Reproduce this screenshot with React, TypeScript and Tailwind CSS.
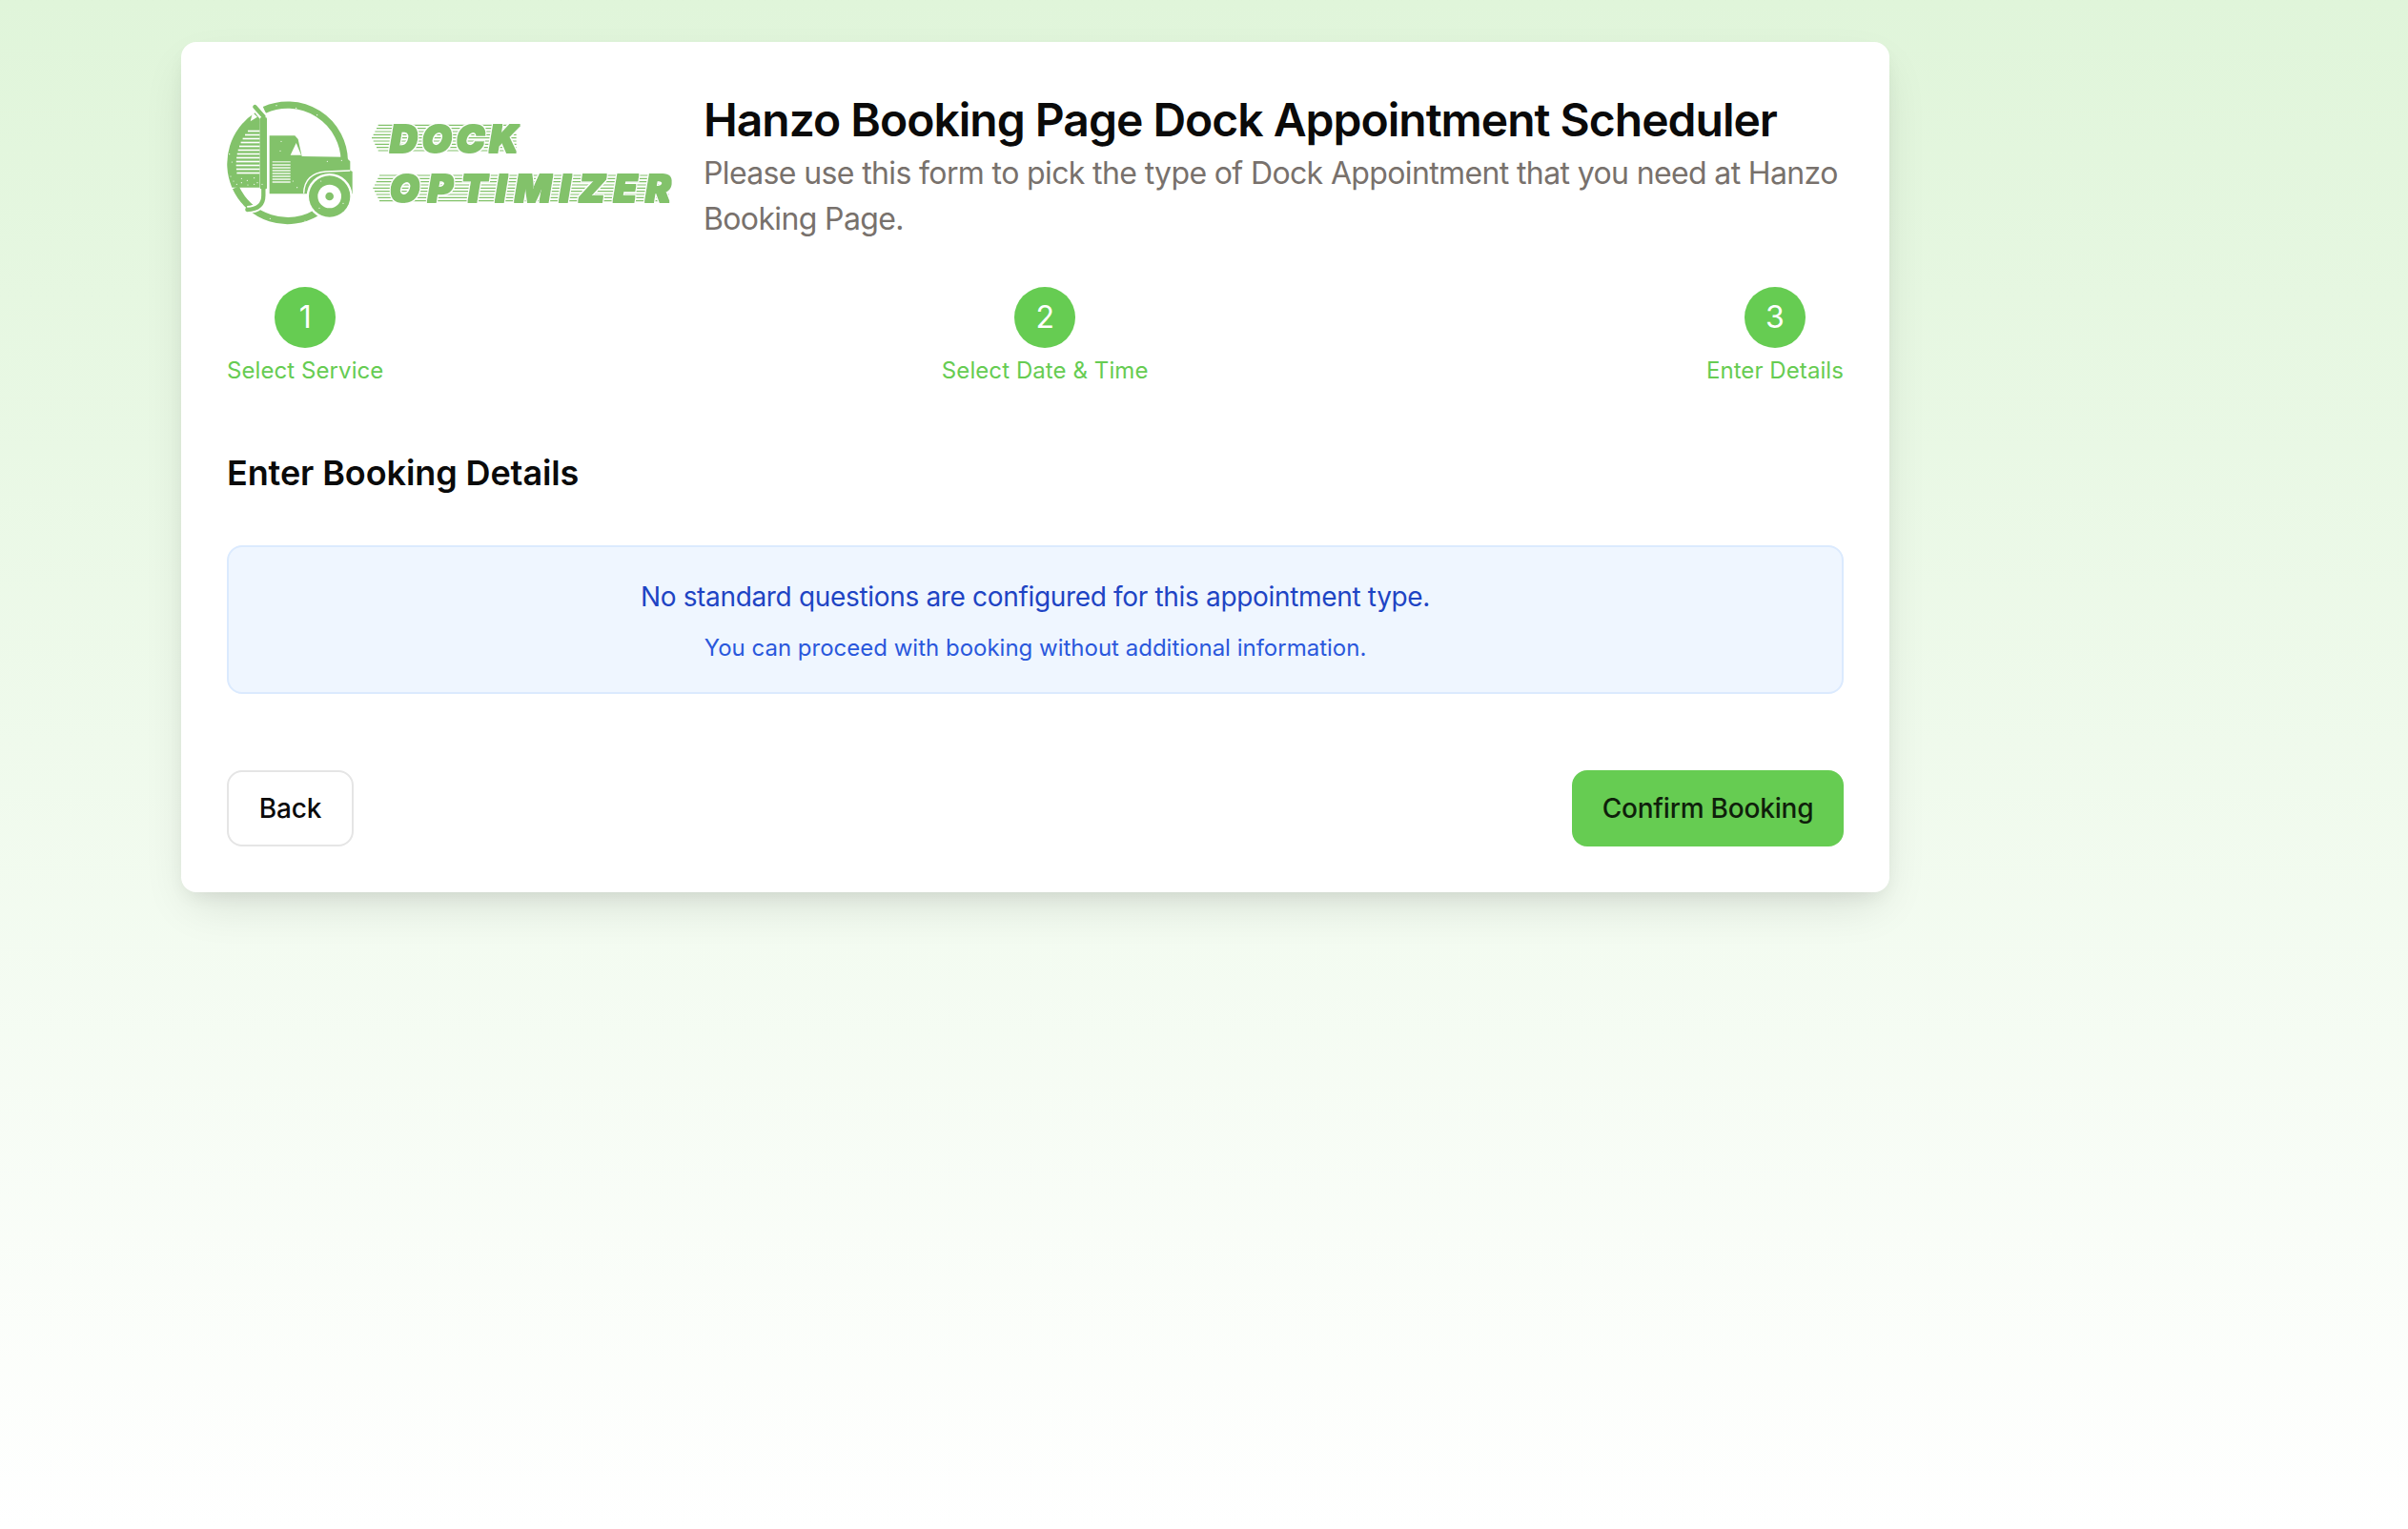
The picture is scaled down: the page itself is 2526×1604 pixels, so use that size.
const steps = [
  { num: 1, label: 'Select Service' },
  { num: 2, label: 'Select Date & Time' },
  { num: 3, label: 'Enter Details' },
];

const green = '#82c26a';
const leftStripes = [140, 152, 164, 176, 188, 200, 212, 224, 236, 248, 260, 272];
const grilleStripes = [247, 256, 265, 274, 283, 292, 301];
const specks: [number, number][] = [
  [62, 215], [70, 240], [66, 285], [100, 292], [118, 298], [140, 290], [85, 310], [120, 312], [150, 305],
  [210, 62], [272, 70], [338, 92], [225, 175], [222, 205], [370, 238], [415, 235], [345, 385], [420, 370],
  [75, 300], [100, 305], [140, 310], [165, 310], [300, 426], [190, 418], [275, 320], [262, 300], [350, 300],
];
const dockLines = [124, 134, 144, 154, 164, 174, 184, 194, 204];
const optimizerLines = [282, 292, 302, 312, 322, 332, 342, 352, 362];

function stripeLeft(y: number) {
  // the stripes start on the inner edge of the disc
  const dy = y - 245;
  return 245 - Math.sqrt(168 * 168 - dy * dy) + 6;
}

function Logo() {
  return (
    <svg viewBox="54 6 1410 480" className="h-[160px] w-[470px] shrink-0">
      <defs>
        <filter id="letter" x="-5%" y="-10%" width="110%" height="120%">
          <feMorphology in="SourceAlpha" operator="dilate" radius="5" result="wide" />
          <feFlood floodColor="#ffffff" />
          <feComposite in2="wide" operator="in" result="halo" />
          <feMorphology in="SourceGraphic" operator="dilate" radius="2" result="bold" />
          <feMerge>
            <feMergeNode in="halo" />
            <feMergeNode in="bold" />
          </feMerge>
        </filter>
      </defs>
      {/* ring */}
      <path d="M172 76 A179 179 0 0 1 424 236" fill="none" stroke={green} strokeWidth="22" />
      <path d="M82 320 A179 179 0 0 0 335 400" fill="none" stroke={green} strokeWidth="22" />
      {/* left half of the disc */}
      <path d="M143 85 A190 190 0 0 0 70 320 L158 320 L158 105 Z" fill={green} />
      <path d="M135 84 L150 98 L128 112 Z" fill="#ffffff" />
      {leftStripes.map((y) => (
        <rect key={y} x={stripeLeft(y)} y={y} width={158 - stripeLeft(y)} height="5" fill="#ffffff" />
      ))}
      {/* exhaust stack */}
      <path d="M142 66 L172 98 L169 350 Q166 388 118 390" fill="none" stroke="#ffffff" strokeWidth="24" />
      <path d="M142 66 L169 96 L169 345 Q169 388 118 390" fill="none" stroke={green} strokeWidth="13" strokeLinecap="round" />
      <rect x="158" y="100" width="22" height="225" rx="4" fill={green} />
      {/* cab and hood */}
      <path d="M188 157 L268 157 L278 168 L290 222 L428 224 L442 238 L442 266 L449 270 L449 340 L188 340 Z" fill={green} />
      <path d="M254 218 L272 180 L288 218 Z" fill="#ffffff" />
      {grilleStripes.map((y) => (
        <rect key={y} x="197" y={y} width="57" height="4" fill="#ffffff" />
      ))}
      <rect x="197" y="238" width="57" height="3" fill="#ffffff" />
      {/* wheel arch and wheel */}
      <path d="M296 338 Q298 276 365 270 L442 267" fill="none" stroke="#ffffff" strokeWidth="4" />
      <circle cx="377" cy="348" r="72" fill="#ffffff" />
      <circle cx="377" cy="348" r="65" fill={green} />
      <circle cx="377" cy="348" r="37" fill="#ffffff" />
      <circle cx="377" cy="348" r="13" fill={green} />
      {specks.map(([x, y]) => (
        <circle key={`${x}-${y}`} cx={x} cy={y} r="1.8" fill="#ffffff" />
      ))}
      {/* lettering */}
      {dockLines.map((y, i) => (
        <line key={y} x1={510 + Math.abs(4 - i) * 5} x2="965" y1={y} y2={y} stroke={green} strokeWidth="3.5" />
      ))}
      {optimizerLines.map((y, i) => (
        <line key={y} x1={514 + Math.abs(4 - i) * 5} x2="1445" y1={y} y2={y} stroke={green} strokeWidth="3.5" />
      ))}
      <text
        x="567"
        y="210"
        textLength="404"
        lengthAdjust="spacing"
        fontFamily="Inter, sans-serif"
        fontSize="120"
        fontWeight="900"
        fontStyle="italic"
        fill={green}
        filter="url(#letter)"
      >
        DOCK
      </text>
      <text
        x="567"
        y="367"
        textLength="884"
        lengthAdjust="spacing"
        fontFamily="Inter, sans-serif"
        fontSize="120"
        fontWeight="900"
        fontStyle="italic"
        fill={green}
        filter="url(#letter)"
      >
        OPTIMIZER
      </text>
    </svg>
  );
}

export default function App() {
  return (
    <div className="min-h-[1604px] bg-gradient-to-b from-[#e0f5da] to-white pl-[190px] pt-[44px] font-[Inter,sans-serif]">
      <div className="w-[1792px] rounded-[16px] bg-white p-[48px] shadow-[0_20px_50px_-10px_rgba(0,0,0,0.12),0_8px_20px_-6px_rgba(0,0,0,0.08)]">
        <div className="flex items-start gap-[30px]">
          <Logo />
          <div className="pt-[4px]">
            <h1 className="text-[48px] leading-[60px] font-semibold tracking-[-1px] text-[#0a0a0a]">
              Hanzo Booking Page Dock Appointment Scheduler
            </h1>
            <p className="mt-[2px] text-[32px] leading-[48px] tracking-[-0.63px] text-[#78716c]">
              Please use this form to pick the type of Dock Appointment that you need at Hanzo Booking Page.
            </p>
          </div>
        </div>

        <div className="mt-[47px] flex justify-between">
          {steps.map((step) => (
            <div key={step.num} className="flex flex-col items-center">
              <div className="flex h-[64px] w-[64px] items-center justify-center rounded-full bg-[#66cc52] text-[32px] text-white">
                {step.num}
              </div>
              <span className="mt-[8px] text-[24px] leading-[32px] tracking-[0.08px] text-[#66cc52]">{step.label}</span>
            </div>
          ))}
        </div>

        <h2 className="mt-[67px] text-[36px] leading-[48px] font-semibold tracking-[-0.1px] text-[#0a0a0a]">Enter Booking Details</h2>

        <div className="mt-[52px] rounded-[16px] border-2 border-[#dbeafe] bg-[#eff6ff] pt-[28px] pb-[26px] text-center">
          <p className="text-[28px] leading-[48px] tracking-[-0.33px] text-[#1e44c4]">No standard questions are configured for this appointment type.</p>
          <p className="mt-[10px] text-[24px] leading-[40px] text-[#2a58dc]">
            You can proceed with booking without additional information.
          </p>
        </div>

        <div className="mt-[80px] flex items-center justify-between">
          <button className="h-[80px] w-[133px] rounded-[16px] border-2 border-[#e5e5e5] bg-white text-[28px] font-medium tracking-[-0.2px] text-[#0a0a0a]">
            Back
          </button>
          <button className="h-[80px] w-[285px] rounded-[16px] bg-[#66cc52] text-[28px] font-medium tracking-[-0.2px] text-[#0f1f0b]">
            Confirm Booking
          </button>
        </div>
      </div>
    </div>
  );
}
